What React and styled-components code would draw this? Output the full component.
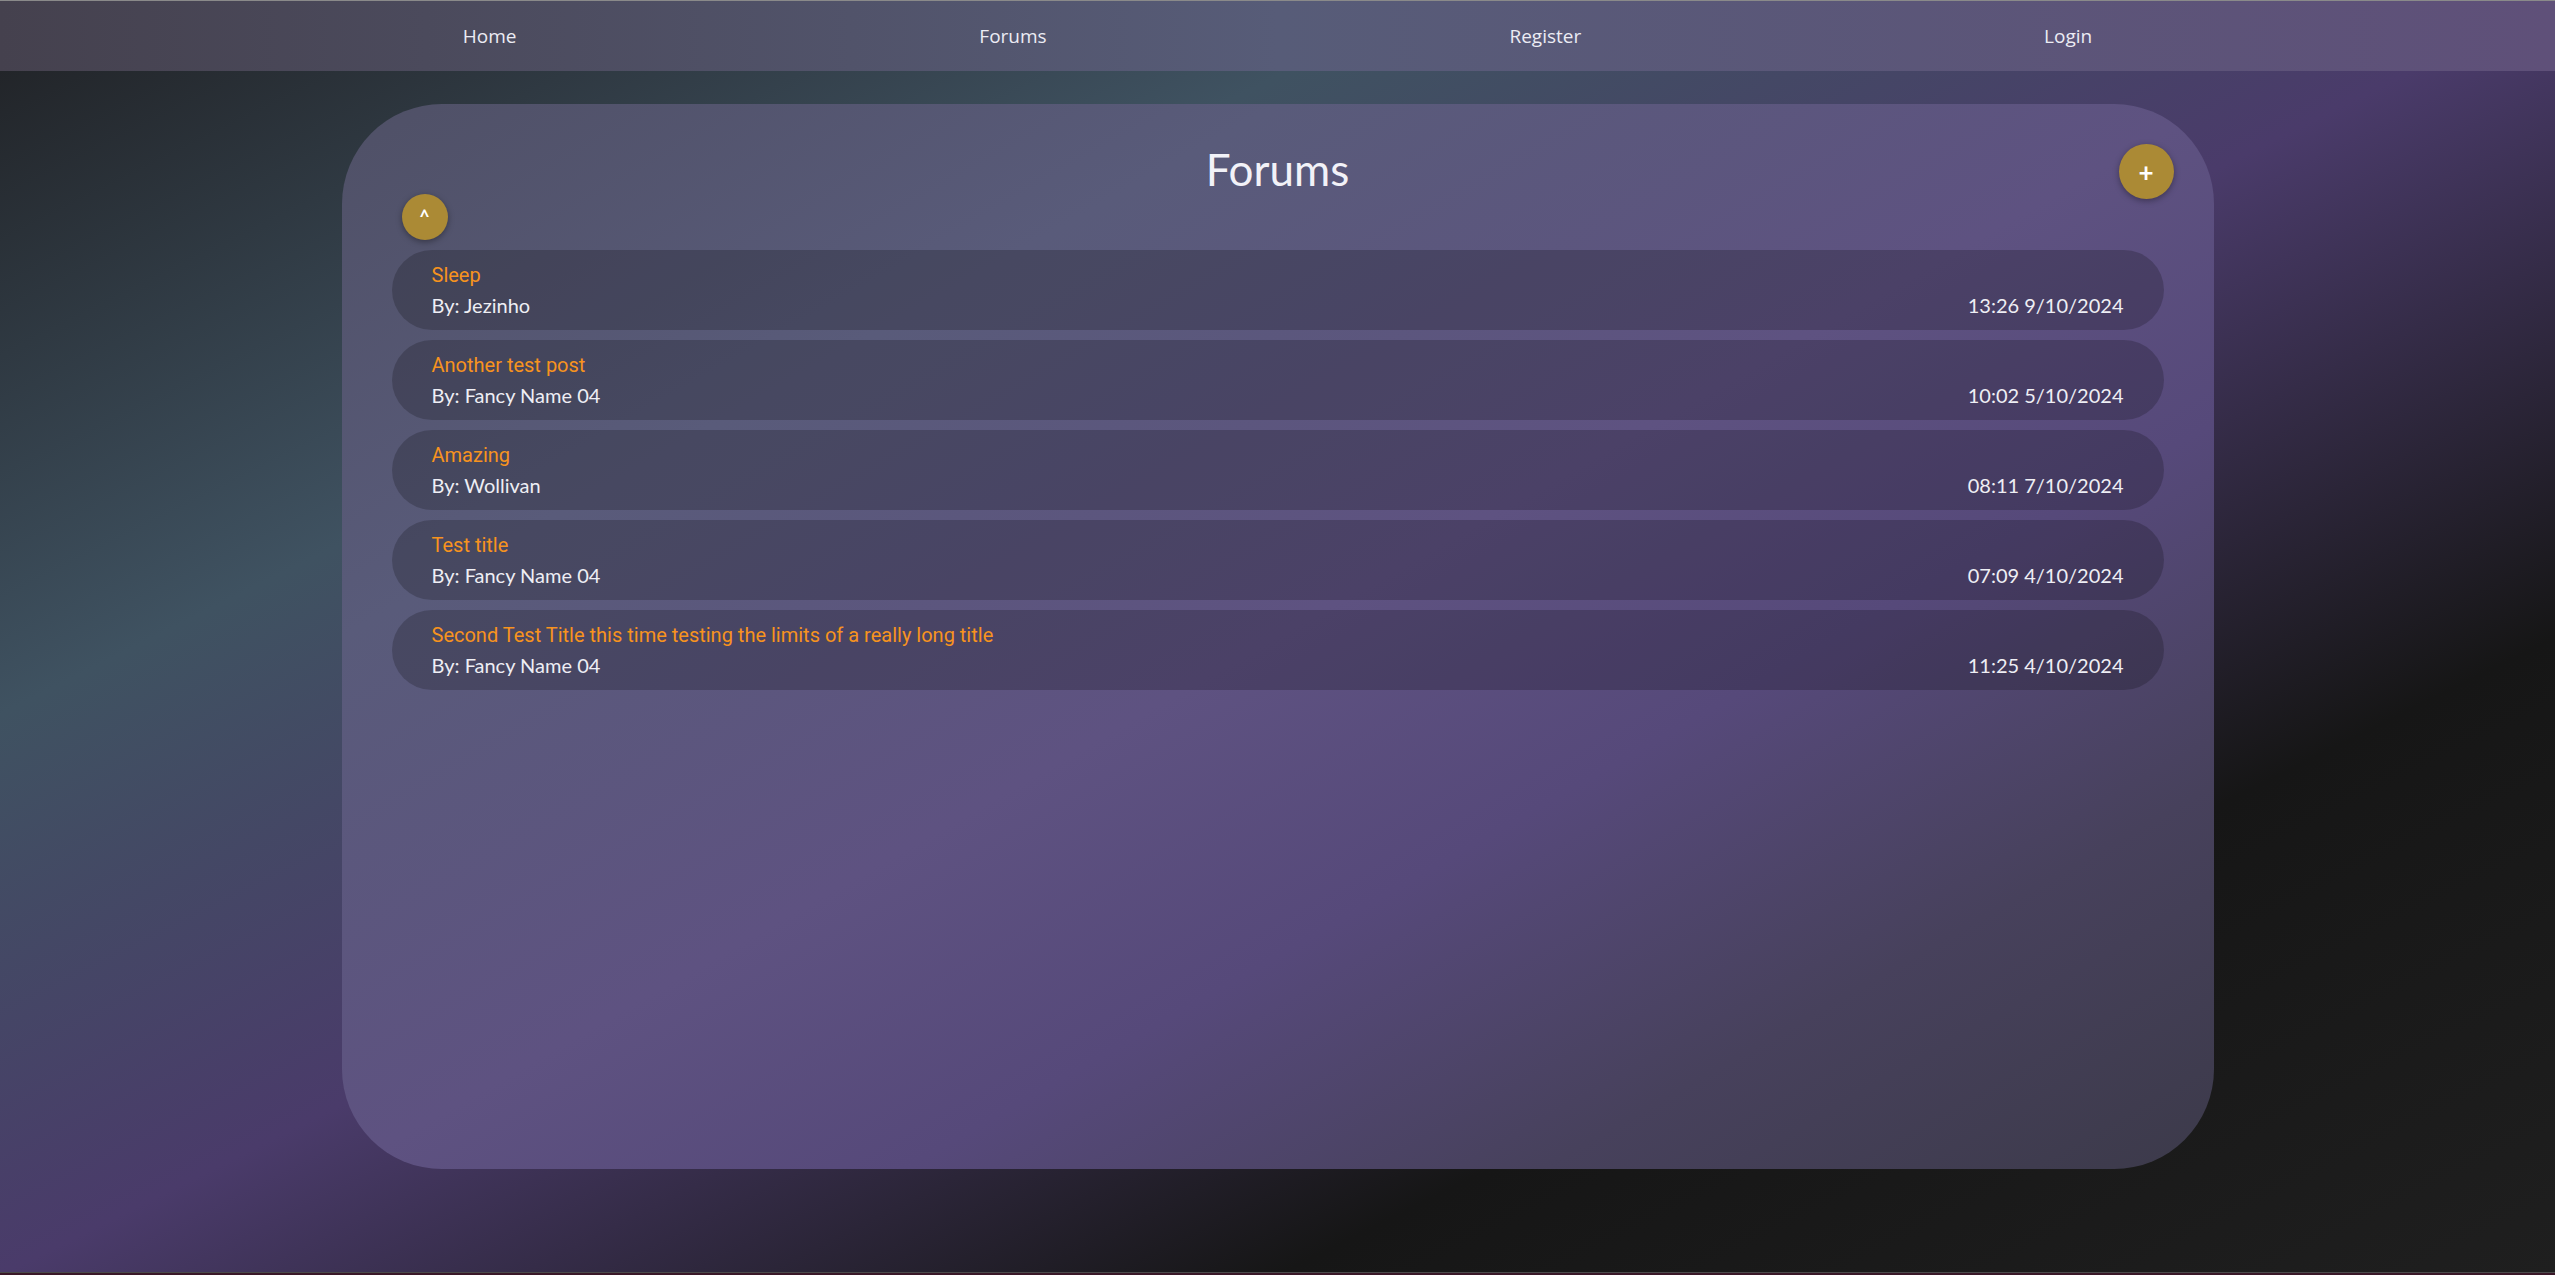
import React from "react";
import styled, { createGlobalStyle } from "styled-components";

const GlobalStyle = createGlobalStyle`
  html, body {
    margin: 0;
    padding: 0;
    height: 100%;
  }
  body {
    font-family: "Lato", "Open Sans", sans-serif;
    overflow: hidden;
  }
  * { box-sizing: border-box; }
`;

const Page = styled.div`
  min-height: 100vh;
  width: 100%;
  display: flex;
  flex-direction: column;
  background: linear-gradient(
    to bottom right,
    #1f2023 0%,
    #3f5261 28%,
    #4a3b6a 50%,
    #161616 75%,
    #1f1f1f 100%
  );
`;

const NavBar = styled.nav`
  height: 71px;
  border-top: 1px solid #8a8a8a;
  display: flex;
  justify-content: space-evenly;
  align-items: center;
  background: linear-gradient(to right, #45414e 0%, #575c78 50%, #5f5079 100%);
`;

const NavLink = styled.a`
  font-family: "Open Sans", "Noto Sans", sans-serif;
  font-size: 19px;
  color: #ececf4;
  text-decoration: none;
  cursor: pointer;
`;

const Main = styled.main`
  padding-top: 33px;
  display: flex;
  justify-content: center;
`;

const Card = styled.section`
  position: relative;
  width: 1872px;
  height: 1065px;
  border-radius: 100px;
  padding: 40px 50px;
  background: linear-gradient(
    to bottom right,
    #4f5066 0%,
    #595b7a 25%,
    #5e5281 50%,
    #56497a 65%,
    #47415c 82%,
    #3c3a4a 100%
  );
`;

const Header = styled.header`
  height: 50px;
  display: flex;
  justify-content: center;
  align-items: center;
`;

const Title = styled.h1`
  margin: 0;
  font-family: "Lato", sans-serif;
  font-weight: 400;
  font-size: 44px;
  line-height: 50px;
  color: #f2f2f8;
`;

const RoundButton = styled.button`
  width: ${(p) => p.$size}px;
  height: ${(p) => p.$size}px;
  border-radius: 50%;
  border: none;
  padding: 0;
  background: #ab8a35;
  color: #ffffff;
  font-family: "Lato", sans-serif;
  font-weight: 700;
  font-size: ${(p) => p.$font}px;
  line-height: 1;
  display: flex;
  align-items: center;
  justify-content: center;
  box-shadow: 0 2px 6px rgba(0, 0, 0, 0.35);
  cursor: pointer;
`;

const AddButton = styled(RoundButton)`
  position: absolute;
  top: 40px;
  right: 40px;
`;

const Toolbar = styled.div`
  display: flex;
  padding-left: 10px;
`;

const List = styled.ul`
  list-style: none;
  margin: 10px 0 0;
  padding: 0;
  display: flex;
  flex-direction: column;
  gap: 10px;
`;

const Row = styled.li`
  height: 80px;
  border-radius: 40px;
  padding: 14px 40px 0;
  background: rgba(0, 0, 0, 0.2);
  display: flex;
  flex-direction: column;
  gap: 6px;
`;

const PostTitle = styled.a`
  font-family: "Roboto", sans-serif;
  font-size: 20px;
  line-height: 23px;
  color: #f7931e;
  text-decoration: none;
`;

const Meta = styled.div`
  display: flex;
  justify-content: space-between;
  font-family: "Lato", sans-serif;
  font-size: 20px;
  line-height: 24px;
  color: #eeeef4;
`;

const Footer = styled.footer`
  margin-top: auto;
  height: 3px;
  border-top: 1px solid #4a4a4a;
  background: #3a1828;
`;

const posts = [
  { title: "Sleep", author: "Jezinho", date: "13:26 9/10/2024" },
  { title: "Another test post", author: "Fancy Name 04", date: "10:02 5/10/2024" },
  { title: "Amazing", author: "Wollivan", date: "08:11 7/10/2024" },
  { title: "Test title", author: "Fancy Name 04", date: "07:09 4/10/2024" },
  {
    title: "Second Test Title this time testing the limits of a really long title",
    author: "Fancy Name 04",
    date: "11:25 4/10/2024",
  },
];

export default function App() {
  return (
    <>
      <GlobalStyle />
      <Page>
        <NavBar>
          <NavLink>Home</NavLink>
          <NavLink>Forums</NavLink>
          <NavLink>Register</NavLink>
          <NavLink>Login</NavLink>
        </NavBar>
        <Main>
          <Card>
            <Header>
              <Title>Forums</Title>
            </Header>
            <AddButton $size={55} $font={26}>+</AddButton>
            <Toolbar>
              <RoundButton $size={46} $font={18}>^</RoundButton>
            </Toolbar>
            <List>
              {posts.map((p) => (
                <Row key={p.title}>
                  <PostTitle>{p.title}</PostTitle>
                  <Meta>
                    <span>By: {p.author}</span>
                    <span>{p.date}</span>
                  </Meta>
                </Row>
              ))}
            </List>
          </Card>
        </Main>
        <Footer />
      </Page>
    </>
  );
}
